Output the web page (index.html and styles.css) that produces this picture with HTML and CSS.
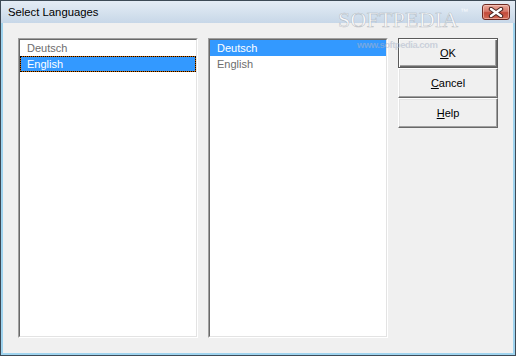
FILE: index.html
```html
<!DOCTYPE html>
<html>
<head>
<meta charset="utf-8">
<title>Select Languages</title>
<link rel="stylesheet" href="styles.css">
</head>
<body>
<div class="window">
  <div class="titlebar">
    <span class="title">Select Languages</span>
    <div class="watermark">
      <span class="wm-logo">SOFTPEDIA</span><span class="wm-tm">™</span>
      <span class="wm-url">www.softpedia.com</span>
    </div>
    <div class="close">
      <svg width="16" height="11" viewBox="0 0 16 11">
        <path d="M3 2 L13 9 M13 2 L3 9" stroke="#4a2420" stroke-width="4.4" stroke-linecap="round"/>
        <path d="M3 2 L13 9 M13 2 L3 9" stroke="#ffffff" stroke-width="2.4" stroke-linecap="round"/>
      </svg>
    </div>
  </div>
  <div class="client">
    <div class="listbox">
      <div class="list-inner">
        <div class="item">Deutsch</div>
        <div class="item selected focused">English</div>
      </div>
    </div>
    <div class="listbox">
      <div class="list-inner">
        <div class="item selected">Deutsch</div>
        <div class="item">English</div>
      </div>
    </div>
    <div class="buttons">
      <div class="btn default"><span><u>O</u>K</span></div>
      <div class="btn"><span><u>C</u>ancel</span></div>
      <div class="btn"><span><u>H</u>elp</span></div>
    </div>
  </div>
</div>
</body>
</html>
```

FILE: styles.css
```css
html, body {
  margin: 0;
  padding: 0;
  background: #ffffff;
}

.window {
  width: 516px;
  height: 356px;
  box-sizing: border-box;
  border: 1px solid #3d4a56;
  background: #9fd3ee;
  display: flex;
  flex-direction: column;
  font-family: "Liberation Sans", Arial, sans-serif;
  font-size: 11px;
}

.titlebar {
  position: relative;
  height: 22px;
  flex: none;
  display: flex;
  align-items: flex-start;
  padding: 0 5px 0 7px;
  background: linear-gradient(to bottom, #e4ecf5 0%, #d3e0ed 60%, #c7d7e8 100%);
}

.title {
  flex: 1;
  line-height: 22px;
  font-size: 11.3px;
  color: #000;
}

.close {
  margin-top: 3px;
  width: 28px;
  height: 16px;
  box-sizing: border-box;
  border: 1px solid #6e2a22;
  border-radius: 3px;
  background: linear-gradient(to bottom, #e9a89a 0%, #d7786a 45%, #c24a3a 55%, #d46a55 100%);
  display: flex;
  align-items: center;
  justify-content: center;
  box-shadow: inset 0 0 0 1px rgba(255, 220, 210, 0.5);
}

.close svg {
  display: block;
}

.watermark {
  position: absolute;
  left: 337px;
  top: 6px;
  pointer-events: none;
}

.wm-logo {
  font-family: "Liberation Serif", "Times New Roman", serif;
  font-size: 22px;
  color: rgba(255, 255, 255, 0.85);
  -webkit-text-stroke: 0.6px rgba(120, 130, 140, 0.45);
  letter-spacing: 0.2px;
}

.wm-tm {
  position: absolute;
  left: 122px;
  top: 0;
  font-size: 8px;
  color: rgba(255, 255, 255, 0.8);
}

.wm-url {
  position: absolute;
  left: 19px;
  top: 32px;
  font-family: "Liberation Sans", Arial, sans-serif;
  font-weight: bold;
  font-size: 9.5px;
  letter-spacing: -0.5px;
  white-space: nowrap;
  color: rgba(170, 180, 200, 0.55);
}

.client {
  flex: 1;
  margin: 0 2px 2px 2px;
  background: #f0f0f0;
  padding: 15px 0 0 15px;
  display: flex;
  align-items: flex-start;
  gap: 10px;
}

.listbox {
  width: 180px;
  height: 300px;
  box-sizing: border-box;
  border: 1px solid;
  border-color: #a0a0a0 #ffffff #ffffff #a0a0a0;
}

.list-inner {
  height: 100%;
  box-sizing: border-box;
  border: 1px solid;
  border-color: #696969 #e3e3e3 #e3e3e3 #696969;
  background: #ffffff;
}

.item {
  height: 16px;
  box-sizing: border-box;
  line-height: 17px;
  padding-left: 7px;
  color: #6d6d6d;
  white-space: nowrap;
}

.item.selected {
  background: #3399ff;
  color: #ffffff;
}

.item.focused {
  border: 1px solid #cc6600;
  outline: 1px dotted #000000;
  outline-offset: -1px;
  padding-left: 6px;
  line-height: 15px;
}

.buttons {
  width: 100px;
  display: flex;
  flex-direction: column;
}

.btn {
  height: 30px;
  box-sizing: border-box;
  border: 1px solid;
  border-color: #ffffff #696969 #696969 #ffffff;
  box-shadow: inset -1px -1px 0 #a0a0a0, inset 1px 1px 0 #e3e3e3;
  background: #f0f0f0;
  display: flex;
  align-items: center;
  justify-content: center;
  color: #000;
  font-size: 11px;
}

.btn.default {
  border-color: #5a5a5a;
  box-shadow: inset 1px 1px 0 #ffffff, inset -1px -1px 0 #696969, inset -2px -2px 0 #a0a0a0;
}
```
